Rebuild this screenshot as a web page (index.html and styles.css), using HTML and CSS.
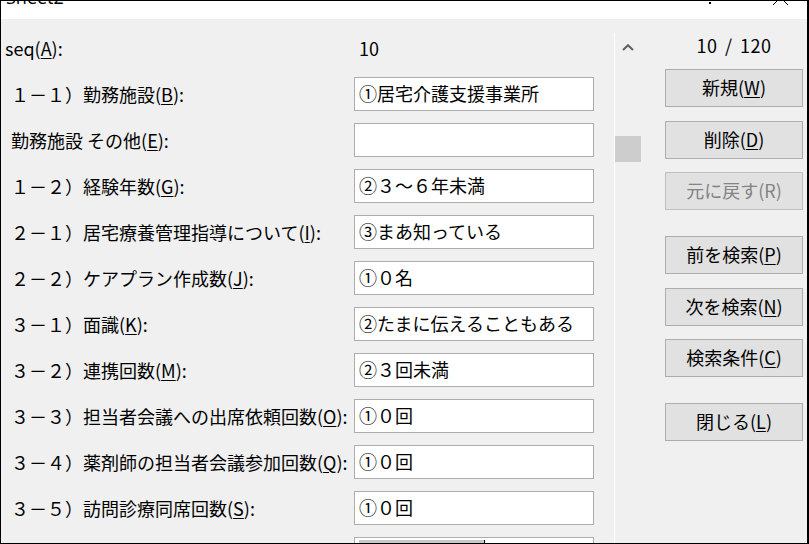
FILE: index.html
```html
<!DOCTYPE html>
<html lang="ja">
<head>
<meta charset="utf-8">
<title>Sheet2</title>
<link rel="stylesheet" href="styles.css">
</head>
<body>
<div class="win">
  <div class="titlebar">
    <span class="title">Sheet2</span>
    <svg class="controls" width="100" height="18" viewBox="0 0 100 18">
      <rect x="8" y="1" width="2" height="2" fill="#000"/>
      <line x1="72" y1="4" x2="87" y2="-11" stroke="#000" stroke-width="1"/>
      <line x1="87" y1="4" x2="72" y2="-11" stroke="#000" stroke-width="1"/>
    </svg>
  </div>
  <div class="main">
    <div class="left">
      <div class="row">
        <div class="lbl">seq(<u>A</u>):</div>
        <div class="value">10</div>
      </div>
      <div class="row">
        <div class="lbl ind">１－１）勤務施設(<u>B</u>):</div>
        <div class="field">①居宅介護支援事業所</div>
      </div>
      <div class="row">
        <div class="lbl ind">勤務施設 その他(<u>E</u>):</div>
        <div class="field"></div>
      </div>
      <div class="row">
        <div class="lbl ind">１－２）経験年数(<u>G</u>):</div>
        <div class="field">②３～６年未満</div>
      </div>
      <div class="row">
        <div class="lbl ind">２－１）居宅療養管理指導について(<u>I</u>):</div>
        <div class="field">③まあ知っている</div>
      </div>
      <div class="row">
        <div class="lbl ind">２－２）ケアプラン作成数(<u>J</u>):</div>
        <div class="field">①０名</div>
      </div>
      <div class="row">
        <div class="lbl ind">３－１）面識(<u>K</u>):</div>
        <div class="field">②たまに伝えることもある</div>
      </div>
      <div class="row">
        <div class="lbl ind">３－２）連携回数(<u>M</u>):</div>
        <div class="field">②３回未満</div>
      </div>
      <div class="row">
        <div class="lbl ind">３－３）担当者会議への出席依頼回数(<u>O</u>):</div>
        <div class="field">①０回</div>
      </div>
      <div class="row">
        <div class="lbl ind">３－４）薬剤師の担当者会議参加回数(<u>Q</u>):</div>
        <div class="field">①０回</div>
      </div>
      <div class="row">
        <div class="lbl ind">３－５）訪問診療同席回数(<u>S</u>):</div>
        <div class="field">①０回</div>
      </div>
      <div class="row">
        <div class="lbl ind"></div>
        <div class="field partial"><div class="selbar"></div></div>
      </div>
    </div>
    <div class="divider"></div>
    <div class="scroll">
      <svg class="arrow" width="12" height="7" viewBox="0 0 12 7">
        <polyline points="1,6 6,1.2 11,6" fill="none" stroke="#606060" stroke-width="2"/>
      </svg>
      <div class="thumb"></div>
    </div>
    <div class="right">
      <div class="counter">10 / 120</div>
      <div class="buttons">
        <div class="btn">新規(<u>W</u>)</div>
        <div class="btn">削除(<u>D</u>)</div>
        <div class="btn disabled">元に戻す(R)</div>
        <div class="btn group">前を検索(<u>P</u>)</div>
        <div class="btn">次を検索(<u>N</u>)</div>
        <div class="btn">検索条件(<u>C</u>)</div>
        <div class="btn group">閉じる(<u>L</u>)</div>
      </div>
    </div>
  </div>
</div>
</body>
</html>
```
FILE: styles.css
```css
* {
  box-sizing: border-box;
  margin: 0;
  padding: 0;
}

html, body {
  width: 809px;
  height: 544px;
  overflow: hidden;
  background: #f0f0f0;
}

body {
  font-family: "Noto Sans CJK JP", "Noto Sans", sans-serif;
  font-size: 18px;
  color: #000;
}

u {
  text-underline-offset: 2px;
}

.win {
  width: 809px;
  height: 544px;
  border: 1px solid #000;
  border-right-width: 2px;
  display: flex;
  flex-direction: column;
  overflow: hidden;
  background: #f0f0f0;
}

.titlebar {
  flex: none;
  height: 18px;
  background: #fff;
  display: flex;
  align-items: flex-end;
  overflow: hidden;
}

.title {
  font-family: "Open Sans", "Noto Sans", sans-serif;
  font-size: 18px;
  line-height: 24px;
  margin-left: 5px;
  margin-bottom: 10px;
  color: #000;
}

.controls {
  margin-left: auto;
  margin-right: 6px;
  align-self: flex-start;
  flex: none;
}

.main {
  flex: 1;
  display: flex;
  min-height: 0;
}

.left {
  width: 613px;
  flex: none;
  padding-top: 12px;
  overflow: hidden;
}

.row {
  display: flex;
  align-items: center;
  height: 34px;
  margin-bottom: 12px;
}

.lbl {
  width: 353px;
  flex: none;
  padding-left: 4px;
  line-height: 24px;
  white-space: nowrap;
  overflow: hidden;
}

.lbl.ind {
  padding-left: 10px;
}

.value {
  padding-left: 5px;
  line-height: 24px;
}

.field {
  width: 240px;
  height: 34px;
  flex: none;
  background: #fff;
  border: 1px solid #adadad;
  padding: 0 4px;
  line-height: 30px;
  white-space: nowrap;
  overflow: hidden;
}

.field.partial {
  padding: 2px 0 0 4px;
}

.selbar {
  width: 126px;
  height: 10px;
  background: #c8c8c8;
  border-right: 1px solid #000;
}

.divider {
  width: 1px;
  flex: none;
  margin-top: 14px;
  background: #fff;
}

.scroll {
  width: 26px;
  flex: none;
  display: flex;
  flex-direction: column;
}

.arrow {
  margin-top: 25px;
  margin-left: 7px;
  display: block;
}

.thumb {
  margin-top: 85px;
  width: 26px;
  height: 26px;
  background: #cdcdcd;
}

.right {
  flex: 1;
  padding: 13.5px 4px 0 24px;
}

.counter {
  width: 138px;
  text-align: center;
  line-height: 24px;
  word-spacing: 3px;
  letter-spacing: 0.5px;
}

.buttons {
  margin-top: 12.5px;
  display: flex;
  flex-direction: column;
  gap: 13.5px;
}

.btn {
  width: 138px;
  height: 38px;
  background: #e1e1e1;
  border: 1px solid #adadad;
  text-align: center;
  line-height: 35px;
  white-space: nowrap;
}

.btn.disabled {
  color: #838383;
  border-color: #bfbfbf;
}

.btn.group {
  margin-top: 12.5px;
}
```
